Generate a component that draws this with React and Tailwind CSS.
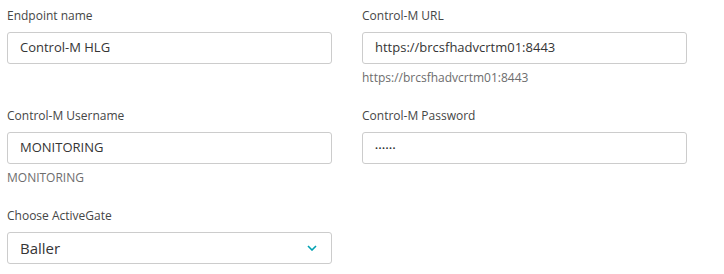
import React from "react";

function Field({ label, value, hint, password, select }) {
  return (
    <div className="flex flex-col">
      <label className="h-4 leading-4 text-[12px] text-[#454646]">{label}</label>
      <div className="mt-2 h-8 flex items-center justify-between rounded-[3px] border border-[#cccccc] bg-white pl-[12px] pr-[12px]">
        {password ? (
          <span className="text-[8px] tracking-[0.5px] text-[#353535]">{value}</span>
        ) : (
          <span className={select ? "text-[15px] text-[#353535]" : "text-[13px] text-[#353535]"}>
            {value}
          </span>
        )}
        {select && (
          <svg width="10" height="6" viewBox="0 0 10 6" fill="none" className="mr-[2px]">
            <path d="M1 1l4 4 4-4" stroke="#00a1b2" strokeWidth="1.6" />
          </svg>
        )}
      </div>
      {hint && (
        <div className="mt-1.5 h-4 leading-4 text-[12px] text-[#6d6d6d]">{hint}</div>
      )}
    </div>
  );
}

export default function App() {
  return (
    <div
      className="w-[724px] h-[274px] bg-white pt-2 pl-[7px]"
      style={{ fontFamily: '"Open Sans", sans-serif' }}
    >
      <div className="grid grid-cols-[325px_325px] gap-x-[30px] gap-y-[22px] auto-rows-[78px]">
        <Field label="Endpoint name" value="Control-M HLG" />
        <Field
          label="Control-M URL"
          value="https://brcsfhadvcrtm01:8443"
          hint="https://brcsfhadvcrtm01:8443"
        />
        <Field label="Control-M Username" value="MONITORING" hint="MONITORING" />
        <Field label="Control-M Password" value="••••••" password />
        <Field label="Choose ActiveGate" value="Baller" select />
      </div>
    </div>
  );
}
